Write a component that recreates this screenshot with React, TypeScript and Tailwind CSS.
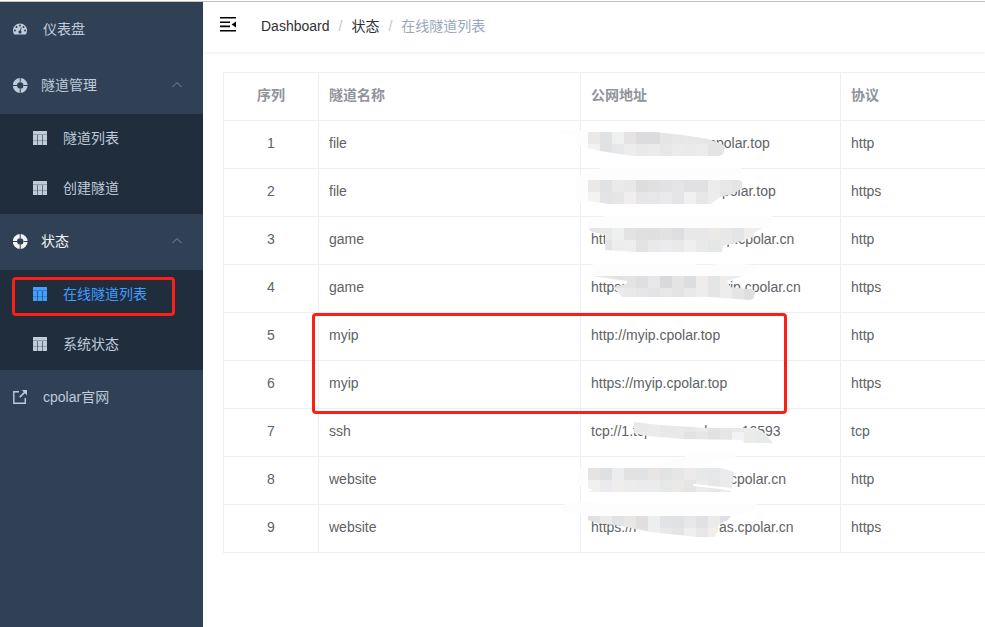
import React, { useState } from 'react';

type Tunnel = {
  id: number;
  name: string;
  prefix?: string;
  gap?: string;
  host: string;
  protocol: string;
};

type Smudge = {
  shape: string;
  haze: string[];
  top: string[];
  bottom: string[];
};

const tunnels: Tunnel[] = [
  { id: 1, name: 'file', gap: 'w-[118px]', host: 'cpolar.top', protocol: 'http' },
  { id: 2, name: 'file', gap: 'w-[124px]', host: 'cpolar.top', protocol: 'https' },
  { id: 3, name: 'game', prefix: 'http', gap: 'w-[102px]', host: 'vip.cpolar.cn', protocol: 'http' },
  { id: 4, name: 'game', prefix: 'https://f', gap: 'w-[86px]', host: 'vip.cpolar.cn', protocol: 'https' },
  { id: 5, name: 'myip', host: 'http://myip.cpolar.top', protocol: 'http' },
  { id: 6, name: 'myip', host: 'https://myip.cpolar.top', protocol: 'https' },
  { id: 7, name: 'ssh', prefix: 'tcp://1.tcp', gap: 'w-[30px]', host: 'cpolar.cn:10593', protocol: 'tcp' },
  { id: 8, name: 'website', gap: 'w-[139px]', host: 'cpolar.cn', protocol: 'http' },
  { id: 9, name: 'website', prefix: 'https://f', gap: 'w-[82px]', host: 'as.cpolar.cn', protocol: 'https' },
];

// Hidden host names, drawn as 12px mosaic cells cut to a brush stroke
const smudges: Record<number, Smudge> = {
  1: {
    shape: '588,11 655,11 683,14 708,18 722,23 725,26 723,33 719,35 633,35 600,30 588,27',
    haze: ['560,10 588,10 588,27 576,25 576,17 560,11'],
    top: ['#ebe9e8', '#e1e2e4', '#eff1f0', '#e6e4e3', '#dcdcde', '#dcdcde', '#e5e5e5', '#e7e7e8', '#eae8e5', '#e6e6e7', '#e5e5e5', '#e5e5e5'],
    bottom: ['#f3f2f0', '#e0e1e3', '#e6e7e8', '#ededed', '#e9e9ea', '#ebebed', '#e7e7e8', '#ebebec', '#e9eaeb', '#ececec', '#e4e4e5', '#e4e4e5'],
  },
  2: {
    shape: '588,11 738,11 742,12 742,19 733,25 720,28 712,34 711,35 609,35 588,32',
    haze: ['568,10 588,3 605,-2 742,-2 740,5 700,11 588,11 588,34 576,34 576,11'],
    top: ['#ebe9e8', '#e0e2e3', '#eaeaeb', '#e8e8e8', '#dddddf', '#e0e0e1', '#e2e2e4', '#e5e5e7', '#e0e1e2', '#e1e1e3', '#ececec', '#e8e8e8', '#e4e4e4'],
    bottom: ['#f3f3f1', '#e2e4e5', '#e6e6e7', '#f0efee', '#e6e6e8', '#e6e7e8', '#eaeaec', '#e5e5e7', '#eff0f2', '#e7e7e8', '#ededed', '#e5e5e5', '#e5e5e5'],
  },
  3: {
    shape: '589,11 763,11 755,15 753,20 735,26 723,29 722,35 636,35 605,33 605,18 590,14',
    haze: ['588,3 609,-2 772,-2 771,10 750,13 588,11'],
    top: ['#e6e6e6', '#e9e9ea', '#eeefef', '#e4e3e3', '#e0e0e1', '#dfdfe1', '#e2e2e3', '#dedee0', '#e8e8e9', '#e8e8e9', '#eceae7', '#e8e8e9', '#e4e5e7', '#eeeeee', '#eeeeee'],
    bottom: ['#efefef', '#e3e4e5', '#ededee', '#eeeeef', '#e3e3e5', '#e9e9ea', '#ebebed', '#e9e9ea', '#efeff0', '#e9e9ea', '#e5e6e6', '#e9e9ea', '#e5e6e8', '#e5e6e8', '#e5e6e8'],
  },
  4: {
    shape: '592,11 742,11 727,16 730,22 755,25 754,33 750,35 710,32 622,32 613,22 627,19 627,16',
    haze: ['592,0 595,-2 694,-2 700,1 726,-2 755,0 752,7 742,11 592,11'],
    top: ['#e6e6e6', '#e6e6e6', '#e2e2e2', '#e4e4e5', '#dfdfe1', '#e7e7e9', '#d9d9dc', '#e4e4e5', '#dcdddf', '#efedeb', '#e3e5e7', '#efedeb', '#ececec', '#e6e6e6'],
    bottom: ['#ececec', '#e7e7e7', '#ececec', '#e9e9ea', '#e6e6e8', '#e4e4e6', '#e7e7e8', '#e4e4e6', '#e9e9ea', '#efedec', '#e3e5e7', '#ededec', '#e5e5e5', '#dfdfe1'],
  },
  7: {
    shape: '634,13 660,16 707,19 757,19 767,26 773,34 745,34 742,31 684,30 647,27 634,24',
    haze: ['680,46 692,43 737,44 735,49 692,49'],
    top: ['#e9e9e9', '#e9e9e9', '#e9e9e9', '#e9e9e9', '#e8e9e9', '#ebebeb', '#e8e8e8', '#e9e9e9', '#e7e7e8', '#e9eaeb', '#e3e3e4', '#e7e7e7', '#e9e9e9', '#ececec', '#ececec', '#ececec'],
    bottom: ['#ececec', '#ececec', '#ececec', '#ececec', '#eaebea', '#ebebeb', '#e9e9e9', '#e9e9e9', '#e2e2e3', '#e5e6e7', '#e1e1e2', '#e6e6e7', '#f2f3f6', '#ebecea', '#e8eaea', '#e8eaea'],
  },
  8: {
    shape: '588,11 720,11 728,13 734,15 732,31 693,27 693,29 720,32 731,34 731,35 589,35 593,33 588,31',
    haze: ['577,11 588,11 588,31 577,27', '645,11 692,-2 737,-2 705,8 700,11'],
    top: ['#e5e4e2', '#dfe0e2', '#ecedee', '#e2e2e2', '#e1e2e4', '#e8e5e4', '#e1e3e5', '#e6e6e7', '#ecebe9', '#e7e8e8', '#e6e7e8', '#eaebed', '#e8e6e5'],
    bottom: ['#f1f0ef', '#ebebed', '#f0eeed', '#ececec', '#eaebee', '#ebebed', '#e6e7e7', '#eae9e8', '#e5e5e6', '#ebebec', '#e6e7e8', '#eaebec', '#eeece9'],
  },
  9: {
    shape: '588,11 731,11 728,15 718,20 718,25 715,32 697,32 650,27 622,21 597,18 588,15',
    haze: ['562,5 566,-2 577,-4 587,-4 597,-2 758,-2 752,7 731,11 588,11 570,9'],
    top: ['#e1e1e2', '#ebebec', '#e2e3e3', '#e8e7e6', '#e0dedf', '#edeeef', '#e2e3e6', '#e1e2e4', '#e7e7e9', '#e0e1e3', '#ecebe9', '#dfe0e3'],
    bottom: ['#ececec', '#ececec', '#e9e9ea', '#e9e9e9', '#e3e1e2', '#eeeeee', '#e8e8e9', '#e5e5e7', '#efefef', '#e7e7e8', '#f0efec', '#e9ebec'],
  },
};

const Mosaic: React.FC<{ id: number }> = ({ id }) => {
  const smudge = smudges[id];
  if (!smudge) return null;

  return (
    <svg
      className="absolute -left-[17px] top-0 h-12 w-60 overflow-visible"
      viewBox="564 0 240 48"
      aria-hidden="true"
    >
      {smudge.haze.map(points => (
        <polygon key={points} points={points} fill="#fdfdfd" />
      ))}
      <clipPath id={`smudge-${id}`}>
        <polygon points={smudge.shape} />
      </clipPath>
      <g clipPath={`url(#smudge-${id})`} shapeRendering="crispEdges">
        {smudge.top.map((fill, i) => (
          <rect key={i} x={588 + i * 12} y="11" width="12" height="12" fill={fill} />
        ))}
        {smudge.bottom.map((fill, i) => (
          <rect key={i} x={588 + i * 12} y="23" width="12" height="12" fill={fill} />
        ))}
      </g>
    </svg>
  );
};

const GaugeIcon = () => (
  <svg className="h-[14px] w-[14px] shrink-0" viewBox="0 0 128 128" aria-hidden="true">
    <path
      fill="currentColor"
      d="M64 14a64 64 0 0 0-64 64c0 12 3 24 10 34 1 2 2 2 4 2h100c2 0 3 0 4-2 7-10 10-22 10-34a64 64 0 0 0-64-64z"
    />
    <g fill="#304156">
      <circle cx="18" cy="78" r="9" />
      <circle cx="32" cy="46" r="9" />
      <circle cx="64" cy="32" r="9" />
      <circle cx="96" cy="46" r="9" />
      <circle cx="110" cy="78" r="9" />
      <path d="M72 49l7 2-7 28a14 14 0 1 1-8-2z" />
    </g>
  </svg>
);

const RingIcon = () => (
  <svg className="h-4 w-[15px] shrink-0" viewBox="0 -1 15 16" fill="none" aria-hidden="true">
    <circle cx="7.2" cy="7.5" r="5.3" stroke="currentColor" strokeWidth="4.2" />
    <path d="M7.2 0v4M7.2 11v4M0 7.5h4M10.5 7.5h4.5" stroke="#304156" strokeWidth="1" />
  </svg>
);

const GridIcon = () => (
  <svg className="h-[14px] w-[14px] shrink-0" viewBox="0 0 14 14" aria-hidden="true">
    <path fill="currentColor" d="M0 0h14v14H0z" />
    <path d="M0 3.5h14M0 9.5h14" stroke="#1f2d3d" strokeOpacity=".28" />
    <path d="M4.5 4v10M9.5 4v10" stroke="#1f2d3d" strokeOpacity=".55" />
  </svg>
);

const LinkIcon = () => (
  <svg className="h-[14px] w-[14px] shrink-0" viewBox="0 0 14 14" fill="none" stroke="currentColor" aria-hidden="true">
    <path d="M6 1.7H.8v11.5h11.5V8" strokeWidth="1.4" />
    <path d="M6.8 7.2L12.5 1.5" strokeWidth="1.7" />
    <path d="M8.8 0H14v5.2z" fill="currentColor" stroke="none" />
  </svg>
);

const FoldIcon = () => (
  <svg className="h-4 w-4" viewBox="0 0 16 16" aria-hidden="true">
    <path d="M0 0h16v1.6H0zM0 4.4h10V6H0zM0 8.6h10v1.6H0zM0 13h16v1.4H0z" />
    <path d="M16 4.4v6L11.6 7.4z" />
  </svg>
);

interface SubMenuProps {
  title: string;
  items: string[];
  current: string;
  onSelect: (item: string) => void;
}

const SubMenu: React.FC<SubMenuProps> = ({ title, items, current, onSelect }) => {
  const [open, setOpen] = useState(true);

  return (
    <li>
      <button
        type="button"
        aria-expanded={open}
        onClick={() => setOpen(!open)}
        className={`flex h-14 w-full items-center gap-[13px] pb-0.5 pl-[13px] pr-5 ${items.includes(current) ? 'text-[#f4f4f5]' : 'text-[#bfcbd9]'}`}
      >
        <RingIcon />
        <span>{title}</span>
        <svg className="ml-auto h-3 w-3" viewBox="0 0 12 12" fill="none" stroke="#7d8a99" aria-hidden="true">
          <path d={open ? 'M1.5 8L6 3.5 10.5 8' : 'M1.5 4L6 8.5 10.5 4'} />
        </svg>
      </button>
      {open && (
        <ul className="bg-[#1f2d3d]">
          {items.map(item => (
            <li key={item} className="relative">
              <a
                href="#"
                onClick={() => onSelect(item)}
                className={`flex h-[50px] items-center gap-4 pb-0.5 pl-[33px] ${item === current ? 'text-[#409eff]' : 'text-[#bfcbd9]'}`}
              >
                <GridIcon />
                <span>{item}</span>
              </a>
              {item === current && (
                <span className="pointer-events-none absolute bottom-1 left-3 right-7 top-[7px] rounded border-3 border-[#fb2015]" />
              )}
            </li>
          ))}
        </ul>
      )}
    </li>
  );
};

export default function App() {
  const [current, setCurrent] = useState('在线隧道列表');

  return (
    <div className="flex min-h-screen flex-col overflow-hidden bg-white pt-px font-['Liberation_Sans','Noto_Sans_CJK_SC',sans-serif] text-sm">
      <div className="h-px bg-[#c4c4c4]" />
      <div className="flex flex-1">
        <nav className="w-[203px] shrink-0 bg-[#304156]">
          <ul>
            <li>
              <a href="#" className="flex h-14 items-center gap-4 pb-0.5 pl-[13px] text-[#bfcbd9]">
                <GaugeIcon />
                <span>仪表盘</span>
              </a>
            </li>
            <SubMenu title="隧道管理" items={['隧道列表', '创建隧道']} current={current} onSelect={setCurrent} />
            <SubMenu title="状态" items={['在线隧道列表', '系统状态']} current={current} onSelect={setCurrent} />
            <li>
              <a href="#" className="flex h-14 items-center gap-4 pb-0.5 pl-[13px] text-[#bfcbd9]">
                <LinkIcon />
                <span>cpolar官网</span>
              </a>
            </li>
          </ul>
        </nav>

        <div className="min-w-0 flex-1">
          <header className="flex h-[50px] items-center pb-0.5 pl-[17px] shadow-[0_1px_4px_rgba(0,21,41,0.08)]">
            <button type="button" aria-label="Toggle sidebar" className="mb-0.5">
              <FoldIcon />
            </button>
            <nav className="ml-[25px] flex text-[#303133]">
              <a href="#">Dashboard</a>
              <span className="mx-[9px] text-[#c0c4cc]">/</span>
              <a href="#">状态</a>
              <span className="mx-[9px] text-[#c0c4cc]">/</span>
              <span className="text-[#97a8be]">{current}</span>
            </nav>
          </header>

          <main className="overflow-hidden pl-5 pt-5">
            <div className="relative">
              <table className="w-[1040px] table-fixed border-separate border-spacing-0 border-l border-t border-[#ebeef5] text-left text-[#606266]">
                <colgroup>
                  <col className="w-[95px]" />
                  <col className="w-[262px]" />
                  <col className="w-[260px]" />
                  <col />
                </colgroup>
                <thead className="text-[#909399]">
                  <tr className="h-12">
                    <th className="border-b border-r border-[#ebeef5] px-2.5 pb-1 text-center font-bold">序列</th>
                    <th className="border-b border-r border-[#ebeef5] px-2.5 pb-1 font-bold">隧道名称</th>
                    <th className="border-b border-r border-[#ebeef5] px-2.5 pb-1 font-bold">公网地址</th>
                    <th className="border-b border-r border-[#ebeef5] px-2.5 pb-1 font-bold">协议</th>
                  </tr>
                </thead>
                <tbody>
                  {tunnels.map(tunnel => (
                    <tr key={tunnel.id} className="h-12">
                      <td className="border-b border-r border-[#ebeef5] px-2.5 pb-1 text-center">{tunnel.id}</td>
                      <td className="border-b border-r border-[#ebeef5] px-2.5 pb-1">{tunnel.name}</td>
                      <td className="relative border-b border-r border-[#ebeef5] px-2.5 pb-1">
                        <div className="flex">
                          {tunnel.prefix && <span>{tunnel.prefix}</span>}
                          {tunnel.gap && <span className={tunnel.gap} />}
                          <span>{tunnel.host}</span>
                        </div>
                        <Mosaic id={tunnel.id} />
                      </td>
                      <td className="border-b border-r border-[#ebeef5] px-2.5 pb-1">{tunnel.protocol}</td>
                    </tr>
                  ))}
                </tbody>
              </table>
              <div className="pointer-events-none absolute left-[89px] top-[241px] h-[101px] w-[475px] rounded border-3 border-[#fb2015]" />
            </div>
          </main>
        </div>
      </div>
    </div>
  );
}
